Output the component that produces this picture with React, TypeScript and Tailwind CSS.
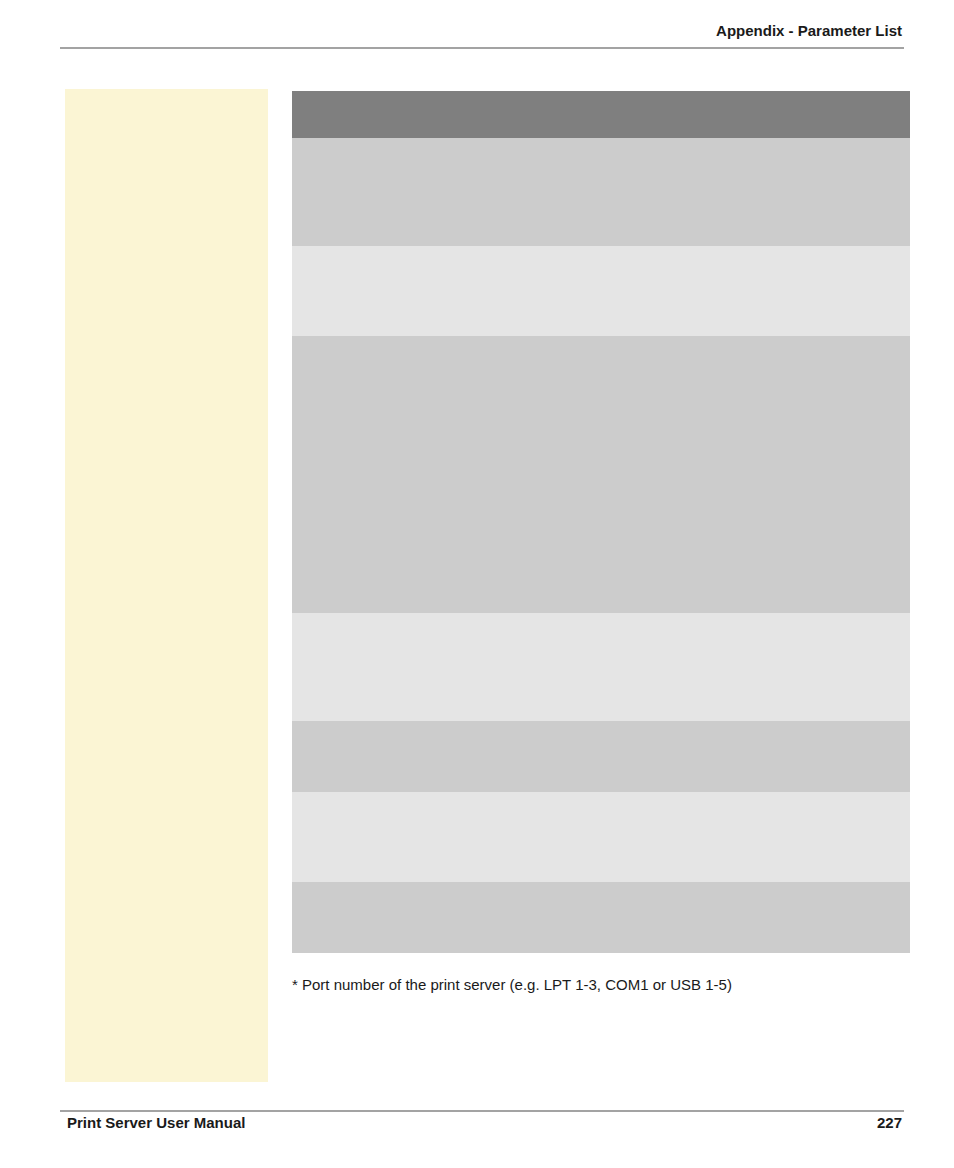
const rows: Array<{ height: string; tone: string }> = [
  { height: "h-[108px]", tone: "bg-[#cccccc]" },
  { height: "h-[90px]", tone: "bg-[#e5e5e5]" },
  { height: "h-[277px]", tone: "bg-[#cccccc]" },
  { height: "h-[108px]", tone: "bg-[#e5e5e5]" },
  { height: "h-[71px]", tone: "bg-[#cccccc]" },
  { height: "h-[90px]", tone: "bg-[#e5e5e5]" },
  { height: "h-[71px]", tone: "bg-[#cccccc]" }
];

export default function App() {
  return (
    <div className="w-[954px] h-[1168px] bg-white text-[#1a1a1a] font-['Liberation_Sans',Arial,sans-serif] overflow-hidden">
      {/* running header */}
      <header className="ml-[60px] w-[844px]">
        <div className="h-[47px] flex items-end justify-end pr-[2px] pb-[6px]">
          <span className="text-[15px] leading-[20px] font-bold">
            Appendix - Parameter List
          </span>
        </div>
        <div className="h-[2px] bg-[#a3a3a3]" />
      </header>

      <main className="flex pl-[65px] mt-[40px]">
        <aside className="w-[203px] h-[993px] bg-[#fbf5d4]" />

        <section className="ml-[24px] w-[618px] mt-[2px]">
          <div className="h-[47px] bg-[#7f7f7f]" />
          {rows.map((row, index) => (
            <div className={`${row.height} ${row.tone}`} key={index} />
          ))}
          <p className="mt-[23px] text-[15px] leading-[18px]">
            * Port number of the print server (e.g. LPT 1-3, COM1 or USB 1-5)
          </p>
        </section>
      </main>

      {/* running footer */}
      <footer className="ml-[60px] w-[844px] mt-[28px]">
        <div className="h-[2px] bg-[#a3a3a3]" />
        <div className="flex justify-between pl-[7px] pr-[2px] pt-[2px]">
          <span className="text-[15px] leading-[18px] font-bold">
            Print Server User Manual
          </span>
          <span className="text-[15px] leading-[18px] font-bold">227</span>
        </div>
      </footer>
    </div>
  );
}
